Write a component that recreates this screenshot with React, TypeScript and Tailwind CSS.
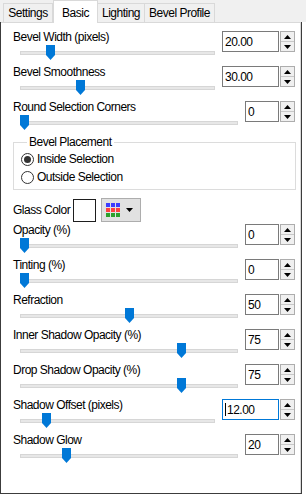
import React from 'react';

type Row = { label: string; value: string; thumb: number; wide?: boolean; focused?: boolean };

const topRows: Row[] = [
  { label: 'Bevel Width (pixels)', value: '20.00', thumb: 26, wide: true },
  { label: 'Bevel Smoothness', value: '30.00', thumb: 56, wide: true },
  { label: 'Round Selection Corners', value: '0', thumb: 0 },
];

const bottomRows: Row[] = [
  { label: 'Opacity (%)', value: '0', thumb: 0 },
  { label: 'Tinting (%)', value: '0', thumb: 0 },
  { label: 'Refraction', value: '50', thumb: 105 },
  { label: 'Inner Shadow Opacity (%)', value: '75', thumb: 157 },
  { label: 'Drop Shadow Opacity (%)', value: '75', thumb: 157 },
  { label: 'Shadow Offset (pixels)', value: '12.00', thumb: 22, wide: true, focused: true },
  { label: 'Shadow Glow', value: '20', thumb: 42 },
];

function Spin({ value, wide, focused }: { value: string; wide?: boolean; focused?: boolean }) {
  return (
    <div className="flex ml-[7px] mt-[1px] h-[21px]">
      <div
        className={`flex items-center pl-[2px] bg-white border ${wide ? 'w-[57px]' : 'w-[34px]'} ${
          focused ? 'border-[#0078d7]' : 'border-[#7a7a7a]'
        }`}
      >
        {focused && <span className="w-px h-[13px] bg-black mr-px" />}
        <span className="leading-none">{value}</span>
      </div>
      <div className="ml-[1px] w-[15px] flex flex-col border border-[#adadad] bg-[#f0f0f0]">
        <div className="flex-1 flex items-center justify-center border-b border-[#c8c8c8]">
          <svg width="7" height="4" viewBox="0 0 7 4">
            <path d="M0 4L3.5 0L7 4Z" fill="#000" />
          </svg>
        </div>
        <div className="flex-1 flex items-center justify-center">
          <svg width="7" height="4" viewBox="0 0 7 4">
            <path d="M0 0H7L3.5 4Z" fill="#000" />
          </svg>
        </div>
      </div>
    </div>
  );
}

function SliderRow({ row }: { row: Row }) {
  return (
    <div className="flex h-[35px] pl-[12px] pr-[5px]">
      <div className="flex-1 flex flex-col">
        <div className="h-[14px] leading-[14px]">{row.label}</div>
        <div className="relative ml-[7px] mt-[1px] h-[16px]">
          <div className="absolute left-0 right-0 top-[6px] h-[4px] border border-[#d6d6d6] bg-[#e7e7e7]" />
          <svg className="absolute top-0" style={{ left: row.thumb }} width="9" height="15" viewBox="0 0 9 15">
            <path d="M0 0H9V10L4.5 15L0 10Z" fill="#0078d7" />
          </svg>
        </div>
      </div>
      <Spin value={row.value} wide={row.wide} focused={row.focused} />
    </div>
  );
}

function Radio({ label, checked }: { label: string; checked?: boolean }) {
  return (
    <div className="flex items-center h-[18px]">
      <div className="w-[13px] h-[13px] rounded-full border border-[#333] flex items-center justify-center">
        {checked && <div className="w-[7px] h-[7px] rounded-full bg-[#333]" />}
      </div>
      <span className="ml-[3px] leading-none">{label}</span>
    </div>
  );
}

const tabs = [
  { name: 'Settings', w: 'w-[50px]' },
  { name: 'Basic', w: 'w-[45px]', active: true },
  { name: 'Lighting', w: 'w-[48px]' },
  { name: 'Bevel Profile', w: 'w-[71px]' },
];

export default function App() {
  return (
    <div
      className="w-[306px] h-[495px] bg-white text-[12px] text-black tracking-[-0.5px] overflow-hidden"
      style={{ fontFamily: '"Liberation Sans", Arial, sans-serif' }}
    >
      {/* tab strip */}
      <div className="h-[22px] bg-[#f0f0f0] flex items-end pl-[3px]">
        {tabs.map((t) =>
          t.active ? (
            <div
              key={t.name}
              className={`${t.w} h-[23px] -mb-px z-10 bg-white border border-b-0 border-[#d9d9d9] flex items-start justify-center pt-[3px]`}
            >
              {t.name}
            </div>
          ) : (
            <div
              key={t.name}
              className={`${t.w} h-[19px] bg-[#f0f0f0] border border-b-0 border-[#d9d9d9] -ml-px first:ml-0 flex items-center justify-center`}
            >
              {t.name}
            </div>
          )
        )}
      </div>

      {/* tab page */}
      <div className="w-[302px] h-[472px] border-l border-r border-b border-[#3c3c3c]">
        <div className="h-full border-t border-r border-[#d9d9d9] pt-[7px]">
          {topRows.map((r) => (
            <SliderRow key={r.label} row={r} />
          ))}

          <fieldset className="ml-[12px] mr-[4px] h-[55px] border border-[#dcdcdc] pl-[7px]">
            <legend className="ml-[6px] px-[2px] leading-[14px]">Bevel Placement</legend>
            <div className="mt-[1px]">
              <Radio label="Inside Selection" checked />
              <Radio label="Outside Selection" />
            </div>
          </fieldset>

          <div className="flex items-center h-[24px] mt-[8px] pl-[12px]">
            <span className="w-[60px]">Glass Color</span>
            <div className="w-[23px] h-[23px] border border-[#1e1e1e] bg-white" />
            <div className="ml-[5px] w-[40px] h-[24px] border border-[#adadad] bg-[#e1e1e1] flex items-center pl-[4px]">
              <div className="grid grid-cols-3 gap-px w-[14px] h-[14px]">
                <div className="bg-[#3c3cff]" />
                <div className="bg-[#3c3cff]" />
                <div className="bg-[#3c3cff]" />
                <div className="bg-[#ff4040]" />
                <div className="bg-[#ff4040]" />
                <div className="bg-[#ff4040]" />
                <div className="bg-[#2ca02c]" />
                <div className="bg-[#2ca02c]" />
                <div className="bg-[#2ca02c]" />
              </div>
              <svg className="ml-[6px]" width="7" height="4" viewBox="0 0 7 4">
                <path d="M0 0H7L3.5 4Z" fill="#000" />
              </svg>
            </div>
          </div>

          <div className="mt-[1px]">
            {bottomRows.map((r) => (
              <SliderRow key={r.label} row={r} />
            ))}
          </div>
        </div>
      </div>
    </div>
  );
}
